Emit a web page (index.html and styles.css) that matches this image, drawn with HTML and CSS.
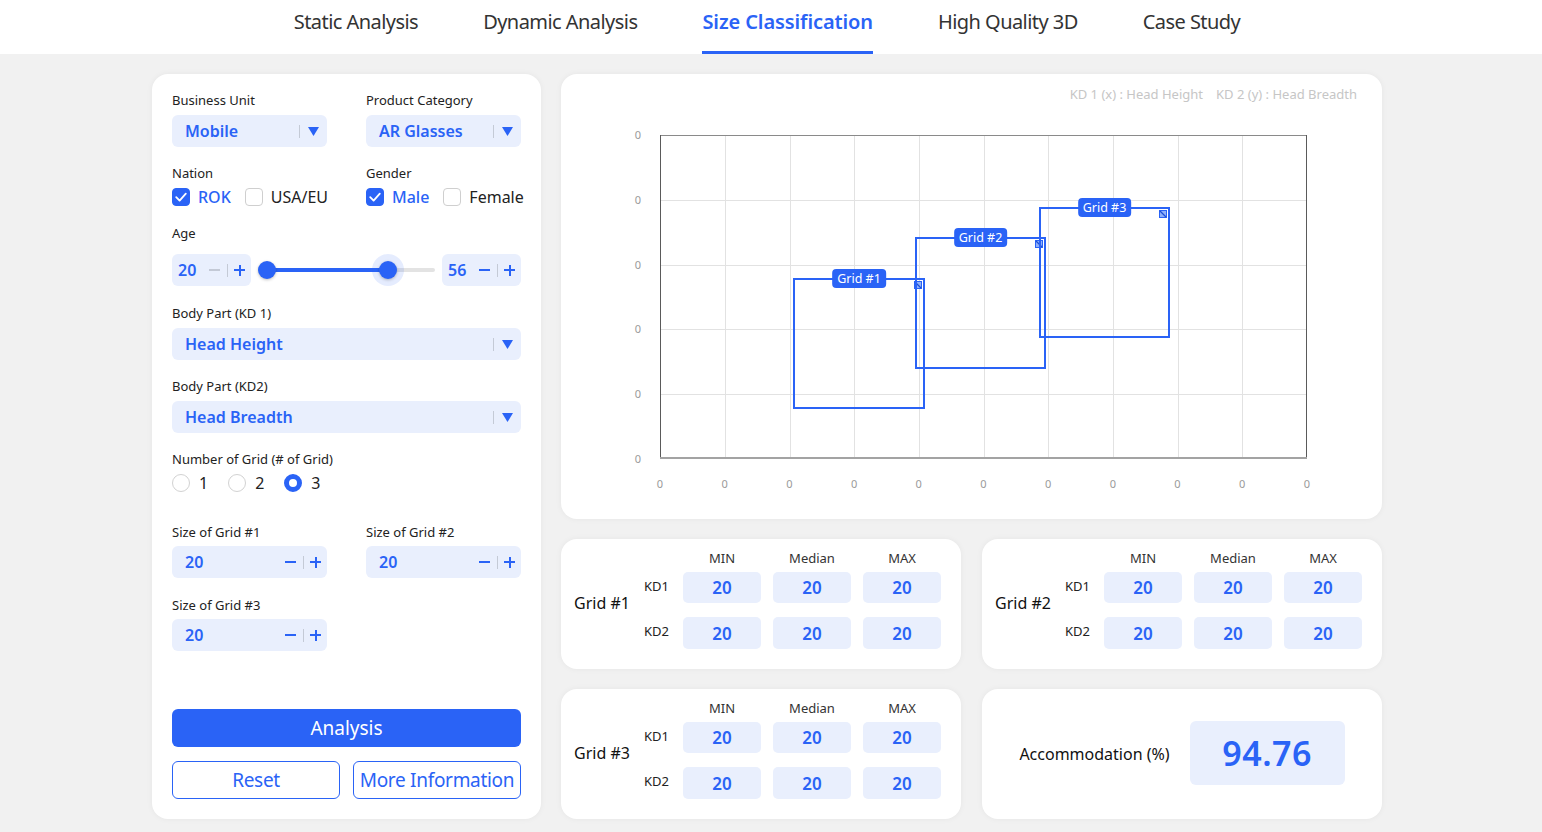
FILE: index.html
```html
<!DOCTYPE html>
<html lang="en">
<head>
<meta charset="utf-8">
<title>Size Classification</title>
<link rel="stylesheet" href="styles.css">
</head>
<body>
<header class="nav">
  <nav class="nav-inner">
    <a class="tab">Static Analysis</a>
    <a class="tab">Dynamic Analysis</a>
    <a class="tab active">Size Classification</a>
    <a class="tab">High Quality 3D</a>
    <a class="tab">Case Study</a>
  </nav>
</header>

<main class="main">
  <section class="panel side">
    <div class="two-col">
      <div class="field">
        <div class="label">Business Unit</div>
        <div class="select">
          <span class="select-text">Mobile</span>
          <span class="sep"></span>
          <svg class="arrow" width="11" height="9" viewBox="0 0 11 9"><path d="M0 0H11L5.5 9Z" fill="#2a63f6"/></svg>
        </div>
      </div>
      <div class="field">
        <div class="label">Product Category</div>
        <div class="select">
          <span class="select-text">AR Glasses</span>
          <span class="sep"></span>
          <svg class="arrow" width="11" height="9" viewBox="0 0 11 9"><path d="M0 0H11L5.5 9Z" fill="#2a63f6"/></svg>
        </div>
      </div>
    </div>

    <div class="two-col mt17">
      <div class="field">
        <div class="label">Nation</div>
        <div class="checks">
          <span class="check on"><svg width="18" height="18" viewBox="0 0 18 18"><path d="M4.2 9.2L7.6 12.6L13.8 5.6" fill="none" stroke="#fff" stroke-width="1.8" stroke-linecap="round" stroke-linejoin="round"/></svg></span>
          <span class="check-text on">ROK</span>
          <span class="check"></span>
          <span class="check-text">USA/EU</span>
        </div>
      </div>
      <div class="field">
        <div class="label">Gender</div>
        <div class="checks">
          <span class="check on"><svg width="18" height="18" viewBox="0 0 18 18"><path d="M4.2 9.2L7.6 12.6L13.8 5.6" fill="none" stroke="#fff" stroke-width="1.8" stroke-linecap="round" stroke-linejoin="round"/></svg></span>
          <span class="check-text on">Male</span>
          <span class="check"></span>
          <span class="check-text">Female</span>
        </div>
      </div>
    </div>

    <div class="field mt16">
      <div class="label">Age</div>
      <div class="age-row">
        <div class="num small">
          <span class="num-val">20</span>
          <span class="minus off"></span>
          <span class="sep"></span>
          <span class="plus"></span>
        </div>
        <div class="slider">
          <div class="track"></div>
          <div class="fill"></div>
          <div class="thumb t1"></div>
          <div class="thumb t2"></div>
        </div>
        <div class="num small">
          <span class="num-val">56</span>
          <span class="minus"></span>
          <span class="sep"></span>
          <span class="plus"></span>
        </div>
      </div>
    </div>

    <div class="field mt18">
      <div class="label">Body Part (KD 1)</div>
      <div class="select">
        <span class="select-text">Head Height</span>
        <span class="sep"></span>
        <svg class="arrow" width="11" height="9" viewBox="0 0 11 9"><path d="M0 0H11L5.5 9Z" fill="#2a63f6"/></svg>
      </div>
    </div>

    <div class="field mt17">
      <div class="label">Body Part (KD2)</div>
      <div class="select">
        <span class="select-text">Head Breadth</span>
        <span class="sep"></span>
        <svg class="arrow" width="11" height="9" viewBox="0 0 11 9"><path d="M0 0H11L5.5 9Z" fill="#2a63f6"/></svg>
      </div>
    </div>

    <div class="field mt17">
      <div class="label">Number of Grid (# of Grid)</div>
      <div class="radios">
        <span class="radio"></span><span class="radio-text">1</span>
        <span class="radio"></span><span class="radio-text">2</span>
        <span class="radio on"></span><span class="radio-text">3</span>
      </div>
    </div>

    <div class="two-col mt29">
      <div class="field">
        <div class="label">Size of Grid #1</div>
        <div class="num wide">
          <span class="num-val">20</span>
          <span class="minus"></span>
          <span class="sep"></span>
          <span class="plus"></span>
        </div>
      </div>
      <div class="field">
        <div class="label">Size of Grid #2</div>
        <div class="num wide">
          <span class="num-val">20</span>
          <span class="minus"></span>
          <span class="sep"></span>
          <span class="plus"></span>
        </div>
      </div>
    </div>

    <div class="two-col mt18">
      <div class="field">
        <div class="label">Size of Grid #3</div>
        <div class="num wide">
          <span class="num-val">20</span>
          <span class="minus"></span>
          <span class="sep"></span>
          <span class="plus"></span>
        </div>
      </div>
    </div>

    <div class="actions">
      <button class="btn primary">Analysis</button>
      <div class="btn-row">
        <button class="btn outline">Reset</button>
        <button class="btn outline">More Information</button>
      </div>
    </div>
  </section>

  <div class="right">
    <section class="panel chart-card">
      <div class="legend"><span>KD 1 (x) : Head Height</span><span class="legend-gap">KD 2 (y) : Head Breadth</span></div>
      <div class="chart-body">
        <div class="y-axis">
          <span>0</span><span>0</span><span>0</span><span>0</span><span>0</span><span>0</span>
        </div>
        <div class="plot">
          <svg class="gridlines" width="647" height="324" viewBox="0 0 647 324">
            <g stroke="#e2e2e2" stroke-width="1">
              <line x1="65.5" y1="0" x2="65.5" y2="324"/>
              <line x1="130.5" y1="0" x2="130.5" y2="324"/>
              <line x1="194.5" y1="0" x2="194.5" y2="324"/>
              <line x1="259.5" y1="0" x2="259.5" y2="324"/>
              <line x1="324.5" y1="0" x2="324.5" y2="324"/>
              <line x1="388.5" y1="0" x2="388.5" y2="324"/>
              <line x1="453.5" y1="0" x2="453.5" y2="324"/>
              <line x1="518.5" y1="0" x2="518.5" y2="324"/>
              <line x1="582.5" y1="0" x2="582.5" y2="324"/>
              <line x1="0" y1="65.5" x2="647" y2="65.5"/>
              <line x1="0" y1="130.5" x2="647" y2="130.5"/>
              <line x1="0" y1="194.5" x2="647" y2="194.5"/>
              <line x1="0" y1="259.5" x2="647" y2="259.5"/>
            </g>
            <line x1="0" y1="0.5" x2="647" y2="0.5" stroke="#8a8a8a" stroke-width="1"/>
            <line x1="0.5" y1="0" x2="0.5" y2="324" stroke="#5a5a5a" stroke-width="1"/>
            <line x1="646.5" y1="0" x2="646.5" y2="324" stroke="#5a5a5a" stroke-width="1"/>
            <line x1="0" y1="323" x2="647" y2="323" stroke="#a3a3a3" stroke-width="2"/>
          </svg>
          <div class="gbox g1">
            <span class="badge">Grid #1</span>
            <svg class="handle" width="8" height="8" viewBox="0 0 8 8"><rect x="0" y="0" width="8" height="8" fill="#2a63f6"/><rect x="1" y="1" width="6" height="6" fill="#8fb0fa"/><line x1="1" y1="1" x2="7" y2="7" stroke="#1d4fd6" stroke-width="1.2"/></svg>
          </div>
          <div class="gbox g2">
            <span class="badge">Grid #2</span>
            <svg class="handle" width="8" height="8" viewBox="0 0 8 8"><rect x="0" y="0" width="8" height="8" fill="#2a63f6"/><rect x="1" y="1" width="6" height="6" fill="#8fb0fa"/><line x1="1" y1="1" x2="7" y2="7" stroke="#1d4fd6" stroke-width="1.2"/></svg>
          </div>
          <div class="gbox g3">
            <span class="badge">Grid #3</span>
            <svg class="handle" width="8" height="8" viewBox="0 0 8 8"><rect x="0" y="0" width="8" height="8" fill="#2a63f6"/><rect x="1" y="1" width="6" height="6" fill="#8fb0fa"/><line x1="1" y1="1" x2="7" y2="7" stroke="#1d4fd6" stroke-width="1.2"/></svg>
          </div>
        </div>
        <div class="x-axis">
          <span>0</span><span>0</span><span>0</span><span>0</span><span>0</span><span>0</span><span>0</span><span>0</span><span>0</span><span>0</span><span>0</span>
        </div>
      </div>
    </section>

    <div class="card-row">
      <section class="panel grid-card">
        <div class="grid-title">Grid #1</div>
        <div class="gtable">
          <div class="grow head"><span></span><span>MIN</span><span>Median</span><span>MAX</span></div>
          <div class="grow"><span class="kd">KD1</span><span class="cell">20</span><span class="cell">20</span><span class="cell">20</span></div>
          <div class="grow r2"><span class="kd">KD2</span><span class="cell">20</span><span class="cell">20</span><span class="cell">20</span></div>
        </div>
      </section>
      <section class="panel grid-card">
        <div class="grid-title">Grid #2</div>
        <div class="gtable">
          <div class="grow head"><span></span><span>MIN</span><span>Median</span><span>MAX</span></div>
          <div class="grow"><span class="kd">KD1</span><span class="cell">20</span><span class="cell">20</span><span class="cell">20</span></div>
          <div class="grow r2"><span class="kd">KD2</span><span class="cell">20</span><span class="cell">20</span><span class="cell">20</span></div>
        </div>
      </section>
    </div>

    <div class="card-row">
      <section class="panel grid-card">
        <div class="grid-title">Grid #3</div>
        <div class="gtable">
          <div class="grow head"><span></span><span>MIN</span><span>Median</span><span>MAX</span></div>
          <div class="grow"><span class="kd">KD1</span><span class="cell">20</span><span class="cell">20</span><span class="cell">20</span></div>
          <div class="grow r2"><span class="kd">KD2</span><span class="cell">20</span><span class="cell">20</span><span class="cell">20</span></div>
        </div>
      </section>
      <section class="panel accom-card">
        <div class="accom-label">Accommodation (%)</div>
        <div class="accom-val">94.76</div>
      </section>
    </div>
  </div>
</main>
</body>
</html>
```

FILE: styles.css
```css
* { box-sizing: border-box; }

html, body {
  margin: 0;
  padding: 0;
}

body {
  background: #f1f1f1;
  font-family: "Noto Sans", "Open Sans", sans-serif;
  color: #222;
  width: 1542px;
  height: 832px;
  overflow: hidden;
}

/* ---------- nav ---------- */
.nav {
  background: #fff;
  height: 54px;
}

.nav-inner {
  width: 1230px;
  margin-left: 152px;
  display: flex;
  justify-content: center;
  gap: 65px;
  height: 54px;
}

.tab {
  display: block;
  height: 54px;
  padding-top: 8px;
  font-size: 20px;
  line-height: 28px;
  color: #333;
  border-bottom: 3px solid transparent;
  white-space: nowrap;
  letter-spacing: -0.55px;
}

.tab.active {
  color: #2a63f6;
  font-weight: 600;
  border-bottom-color: #2a63f6;
  letter-spacing: -0.1px;
}

/* ---------- layout ---------- */
.main {
  display: flex;
  gap: 20px;
  padding: 20px 0 0 152px;
}

.panel {
  background: #fff;
  border-radius: 16px;
  box-shadow: 0 0 6px rgba(0, 0, 0, 0.05);
}

.side {
  width: 389px;
  height: 745px;
  padding: 17px 20px 20px 20px;
  display: flex;
  flex-direction: column;
}

.right {
  width: 821px;
  display: grid;
  grid-template-rows: 445px 130px 130px;
  row-gap: 20px;
}

.card-row {
  display: grid;
  grid-template-columns: 400px 400px;
  column-gap: 21px;
}

/* ---------- form ---------- */
.two-col {
  display: grid;
  grid-template-columns: 155px 155px;
  column-gap: 39px;
}

.mt16 { margin-top: 16px; }
.mt17 { margin-top: 17px; }
.mt18 { margin-top: 18px; }
.mt29 { margin-top: 29px; }

.label {
  font-size: 13px;
  line-height: 18px;
  color: #222;
  white-space: nowrap;
}

.select {
  margin-top: 6px;
  height: 32px;
  background: #e9effd;
  border-radius: 6px;
  display: flex;
  align-items: center;
  padding: 0 8px 0 13px;
}

.select-text {
  flex: 1;
  font-size: 16px;
  font-weight: 600;
  color: #2a63f6;
  white-space: nowrap;
}

.sep {
  width: 1px;
  height: 13px;
  background: #c4cad6;
}

.select .sep { margin-right: 8px; }

.arrow { display: block; }

.checks {
  margin-top: 4px;
  height: 22px;
  display: flex;
  align-items: center;
}

.check {
  width: 18px;
  height: 18px;
  border-radius: 4px;
  border: 1px solid #cfcfcf;
  background: #fff;
  flex: none;
}

.check.on {
  background: #2a63f6;
  border-color: #2a63f6;
}

.check svg {
  display: block;
  margin: -1px;
}

.check-text {
  margin-left: 8px;
  margin-right: 14px;
  font-size: 16px;
  color: #222;
  white-space: nowrap;
}

.check-text.on {
  color: #2a63f6;
  font-weight: 500;
}

.check-text:last-child { margin-right: 0; }

/* age */
.age-row {
  margin-top: 12px;
  display: flex;
  align-items: center;
  height: 32px;
}

.num {
  height: 32px;
  background: #e9effd;
  border-radius: 6px;
  display: flex;
  align-items: center;
}

.num.small {
  width: 79px;
  padding: 0 6px;
}

.num.wide {
  margin-top: 5px;
  width: 155px;
  padding: 0 6px 0 13px;
}

.num-val {
  flex: 1;
  font-size: 16px;
  font-weight: 600;
  color: #2a63f6;
}

.minus {
  width: 11px;
  height: 2px;
  background: #2a63f6;
  margin-right: 7px;
}

.minus.off { background: #c3c9d6; }

.plus {
  position: relative;
  width: 11px;
  height: 11px;
  margin-left: 6px;
}

.plus::before,
.plus::after {
  content: "";
  position: absolute;
  background: #2a63f6;
}

.plus::before {
  left: 0;
  top: 4.5px;
  width: 11px;
  height: 2px;
}

.plus::after {
  left: 4.5px;
  top: 0;
  width: 2px;
  height: 11px;
}

.slider {
  position: relative;
  flex: 1;
  height: 32px;
}

.track {
  position: absolute;
  left: 7px;
  right: 7px;
  top: 14px;
  height: 4px;
  border-radius: 2px;
  background: #e3e3e3;
}

.fill {
  position: absolute;
  left: 16px;
  width: 121px;
  top: 14px;
  height: 4px;
  background: #2a63f6;
}

.thumb {
  position: absolute;
  top: 7px;
  width: 18px;
  height: 18px;
  border-radius: 50%;
  background: #2a63f6;
  box-shadow: 0 1px 3px rgba(0, 0, 0, 0.25);
}

.thumb.t1 { left: 7px; }

.thumb.t2 {
  left: 128px;
  box-shadow: 0 1px 3px rgba(0, 0, 0, 0.25), 0 0 0 7px rgba(42, 99, 246, 0.12);
}

/* radios */
.radios {
  margin-top: 4px;
  height: 22px;
  display: flex;
  align-items: center;
}

.radio {
  width: 18px;
  height: 18px;
  border-radius: 50%;
  border: 1px solid #d2d2d2;
  background: #fff;
  flex: none;
}

.radio.on {
  border: 5px solid #2a63f6;
}

.radio-text {
  margin-left: 9px;
  margin-right: 20px;
  font-size: 16px;
  color: #222;
}

/* buttons */
.actions {
  margin-top: auto;
}

.btn {
  display: block;
  font-family: "Noto Sans", "Open Sans", sans-serif;
  font-size: 19px;
  border-radius: 6px;
  height: 38px;
  cursor: pointer;
  white-space: nowrap;
  padding: 0;
}

.btn.primary {
  width: 100%;
  background: #2a63f6;
  color: #fff;
  border: none;
}

.btn-row {
  margin-top: 14px;
  display: grid;
  grid-template-columns: 168px 168px;
  column-gap: 13px;
}

.btn.outline {
  background: #fff;
  color: #2a63f6;
  border: 1.5px solid #2a63f6;
  letter-spacing: -0.3px;
}

/* ---------- chart ---------- */
.chart-card {
  padding: 11px 25px 0 0;
  display: flex;
  flex-direction: column;
}

.legend {
  align-self: flex-end;
  font-size: 13px;
  line-height: 18px;
  color: #c6c6c6;
  white-space: nowrap;
}

.legend-gap { margin-left: 13px; }

.chart-body {
  margin-top: 32px;
  margin-left: 69px;
  display: grid;
  grid-template-columns: 30px 647px;
  grid-template-rows: 324px auto;
}

.y-axis {
  margin-top: -8px;
  height: 340px;
  display: flex;
  flex-direction: column;
  justify-content: space-between;
  align-items: flex-end;
  padding-right: 19px;
  font-size: 11px;
  line-height: 16px;
  color: #9a9a9a;
}

.plot {
  position: relative;
  width: 647px;
  height: 324px;
}

.gridlines { display: block; }

.x-axis {
  grid-column: 2;
  margin-top: 17px;
  margin-left: -10px;
  width: 667px;
  display: flex;
  justify-content: space-between;
  font-size: 11px;
  line-height: 16px;
  color: #9a9a9a;
}

.x-axis span {
  width: 20px;
  text-align: center;
}

.gbox {
  position: absolute;
  border: 2px solid #2a63f6;
}

.g1 { left: 133px; top: 143px; width: 132px; height: 131px; }
.g2 { left: 255px; top: 102px; width: 131px; height: 132px; }
.g3 { left: 379px; top: 72px; width: 131px; height: 131px; }

.badge {
  position: absolute;
  top: -11px;
  left: 50%;
  transform: translateX(-50%);
  height: 19px;
  padding: 0 5px;
  border-radius: 4px;
  background: #2a63f6;
  color: #fff;
  font-size: 12.5px;
  line-height: 19px;
  white-space: nowrap;
}

.handle {
  position: absolute;
  top: 1px;
  right: 1px;
  display: block;
}

/* ---------- grid cards ---------- */
.grid-card {
  display: flex;
  align-items: center;
  padding: 10px 19px 20px 13px;
}

.grid-title {
  width: 71px;
  padding-top: 8px;
  font-size: 16px;
  color: #111;
  white-space: nowrap;
}

.gtable {
  display: flex;
  flex-direction: column;
}

.grow {
  display: grid;
  grid-template-columns: 26px 78px 78px 78px;
  column-gap: 12px;
  align-items: center;
  height: 31px;
}

.grow.head {
  height: 18px;
  margin-bottom: 5px;
  font-size: 13px;
  line-height: 18px;
  color: #333;
  text-align: center;
}

.grow.r2 {
  margin-top: 14px;
  height: 32px;
}

.kd {
  font-size: 13px;
  color: #222;
  margin-left: -1px;
  margin-top: -4px;
  align-self: center;
}

.cell {
  height: 100%;
  background: #e9effd;
  border-radius: 5px;
  display: flex;
  align-items: center;
  justify-content: center;
  font-size: 17px;
  font-weight: 600;
  color: #2a63f6;
}

/* ---------- accommodation ---------- */
.accom-card {
  display: flex;
  align-items: center;
  justify-content: center;
  gap: 20px;
}

.accom-label {
  font-size: 16px;
  color: #111;
  white-space: nowrap;
}

.accom-val {
  width: 155px;
  height: 64px;
  margin-top: -3px;
  background: #e9effd;
  border-radius: 6px;
  display: flex;
  align-items: center;
  justify-content: center;
  font-size: 34px;
  font-weight: 600;
  color: #2a63f6;
  letter-spacing: 0.5px;
}
```
